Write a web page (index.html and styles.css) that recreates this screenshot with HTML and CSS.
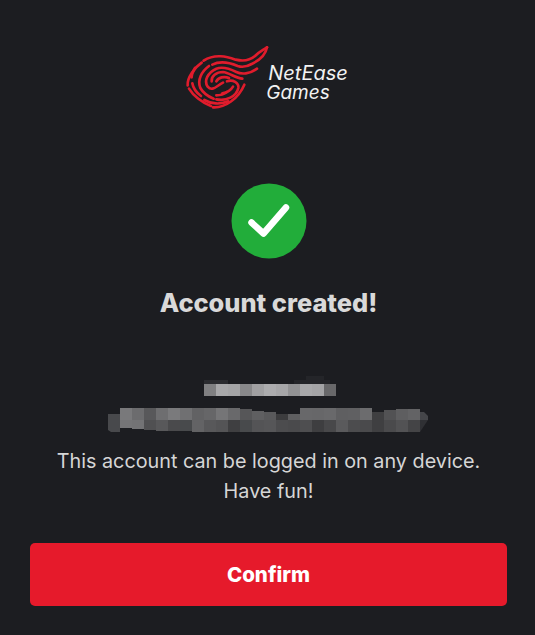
FILE: index.html
```html
<!DOCTYPE html>
<html lang="en">
<head>
<meta charset="utf-8">
<title>Account created</title>
<link rel="stylesheet" href="styles.css">
</head>
<body>
<main class="page">
  <div class="logo">
    <svg class="logo-mark" viewBox="0 0 270 198" aria-hidden="true">
      <g fill="none" stroke="#e01c2c" stroke-width="8" stroke-linecap="round" stroke-linejoin="round">
        <path d="M252 10C238 20 228 24 216 36C200 50 180 52 158 47C132 38 96 28 62 50"/>
        <path d="M252 10C248 32 228 50 206 60C192 68 176 70 164 66C140 56 112 50 88 62"/>
        <path d="M56 56C36 70 12 100 14 124"/>
        <path d="M36 72C30 82 26 92 26 100"/>
        <path d="M18 134C30 154 56 176 84 186"/>
        <path d="M90 190C126 192 166 164 184 122"/>
        <path d="M78 66C56 82 42 108 52 132C60 146 76 158 92 164"/>
        <path d="M28 118C30 130 40 146 54 156"/>
        <path d="M64 168C84 180 112 182 136 172"/>
        <path d="M100 166C130 172 160 158 166 132C168 116 150 106 132 112"/>
        <path d="M120 116C100 126 88 144 74 128C62 110 74 86 100 74C122 66 144 76 160 84C176 92 200 90 222 74"/>
        <path d="M86 112C84 96 100 84 120 84C138 86 158 102 178 104"/>
        <path d="M100 112C106 100 124 96 138 102"/>
        <path d="M118 148C132 146 144 138 150 128"/>
        <path d="M100 154C114 154 124 150 132 144"/>
      </g>
    </svg>
    <div class="logo-text">
      <span class="logo-net">NetEase</span>
      <span class="logo-games">Games</span>
    </div>
  </div>

  <svg class="check" viewBox="0 0 76 76" aria-hidden="true">
    <circle cx="38" cy="38" r="37.5" fill="#22ad3a"/>
    <path d="M20.5 39.5L32.5 50.5L55 24.5" fill="none" stroke="#fff" stroke-width="6.5" stroke-linecap="round" stroke-linejoin="round"/>
  </svg>

  <h1 class="title">Account created!</h1>

  <svg class="mosaic" viewBox="0 0 336 60" aria-hidden="true">
    <g>
      <path d="M96 4L120 4V8H96Z" fill="#2b2c30"/>
      <path d="M186 4L198 4V0H216V4H222V8H186Z" fill="#242529"/>
      <rect x="96" y="8" width="12" height="12" fill="#808082"/>
      <rect x="108" y="8" width="12" height="12" fill="#a8a8aa"/>
      <rect x="120" y="8" width="12" height="12" fill="#a4a4a6"/>
      <rect x="132" y="8" width="12" height="12" fill="#88888a"/>
      <rect x="144" y="8" width="12" height="12" fill="#a0a0a2"/>
      <rect x="156" y="8" width="12" height="12" fill="#acacae"/>
      <rect x="168" y="8" width="12" height="12" fill="#a6a6a8"/>
      <rect x="180" y="8" width="12" height="12" fill="#929294"/>
      <rect x="192" y="8" width="12" height="12" fill="#a8a8aa"/>
      <rect x="204" y="8" width="12" height="12" fill="#a4a4a6"/>
      <rect x="216" y="8" width="12" height="12" fill="#68686a"/>
      <path d="M0 38H12V56H3L0 54Z" fill="#48494c"/>
      <rect x="12" y="32" width="12" height="12" fill="#79797b"/>
      <rect x="24" y="32" width="12" height="12" fill="#6c6c6e"/>
      <rect x="36" y="32" width="12" height="12" fill="#58585a"/>
      <rect x="48" y="32" width="12" height="12" fill="#6e6e70"/>
      <rect x="60" y="32" width="12" height="12" fill="#7a7a7c"/>
      <rect x="72" y="32" width="12" height="12" fill="#707072"/>
      <rect x="84" y="32" width="12" height="12" fill="#626264"/>
      <rect x="96" y="32" width="12" height="12" fill="#666668"/>
      <rect x="108" y="32" width="12" height="12" fill="#757577"/>
      <rect x="120" y="32" width="12" height="12" fill="#69696b"/>
      <rect x="132" y="33" width="12" height="11" fill="#565658"/>
      <rect x="144" y="35" width="12" height="9" fill="#5f5f61"/>
      <rect x="156" y="36" width="12" height="8" fill="#59595b"/>
      <rect x="168" y="38" width="12" height="6" fill="#3c3c3e"/>
      <rect x="180" y="38" width="12" height="6" fill="#5e5e60"/>
      <rect x="192" y="32" width="12" height="12" fill="#68686a"/>
      <rect x="204" y="32" width="12" height="12" fill="#676769"/>
      <rect x="216" y="32" width="12" height="12" fill="#69696b"/>
      <rect x="228" y="32" width="12" height="12" fill="#5f5f61"/>
      <rect x="240" y="32" width="12" height="12" fill="#606062"/>
      <rect x="252" y="32" width="12" height="12" fill="#6c6c6e"/>
      <rect x="264" y="36" width="12" height="8" fill="#3f3f41"/>
      <rect x="276" y="34" width="12" height="10" fill="#525254"/>
      <rect x="288" y="33" width="12" height="11" fill="#5e5e60"/>
      <rect x="300" y="33" width="12" height="11" fill="#636365"/>
      <path d="M312 36H316L320 40V44H312Z" fill="#45464a"/>
      <rect x="12" y="44" width="12" height="8" fill="#757577"/>
      <rect x="24" y="44" width="12" height="9" fill="#737375"/>
      <rect x="36" y="44" width="12" height="10" fill="#505052"/>
      <rect x="48" y="44" width="12" height="11" fill="#58585a"/>
      <rect x="60" y="44" width="12" height="11" fill="#4a4a4c"/>
      <rect x="72" y="44" width="12" height="11" fill="#484a4c"/>
      <rect x="84" y="44" width="12" height="12" fill="#636365"/>
      <rect x="96" y="44" width="12" height="12" fill="#58585a"/>
      <rect x="108" y="44" width="12" height="12" fill="#545456"/>
      <rect x="120" y="44" width="12" height="12" fill="#3f3f41"/>
      <rect x="132" y="44" width="12" height="12" fill="#484a4c"/>
      <rect x="144" y="44" width="12" height="12" fill="#545456"/>
      <rect x="156" y="44" width="12" height="12" fill="#565658"/>
      <rect x="168" y="44" width="12" height="12" fill="#4c4c4e"/>
      <rect x="180" y="44" width="12" height="12" fill="#4a4a4c"/>
      <rect x="192" y="44" width="12" height="12" fill="#4e4e50"/>
      <rect x="204" y="44" width="12" height="12" fill="#3e3e40"/>
      <rect x="216" y="44" width="12" height="12" fill="#48484a"/>
      <rect x="228" y="44" width="12" height="12" fill="#5a5a5c"/>
      <rect x="240" y="44" width="12" height="12" fill="#4c4c4e"/>
      <rect x="252" y="44" width="12" height="12" fill="#4a4a4c"/>
      <rect x="264" y="44" width="12" height="12" fill="#3f3f41"/>
      <rect x="276" y="44" width="12" height="12" fill="#4a4a4c"/>
      <rect x="288" y="44" width="12" height="12" fill="#525254"/>
      <rect x="300" y="44" width="12" height="12" fill="#444446"/>
      <path d="M312 44H320L316 50L312 56Z" fill="#2f3034"/>
    </g>
  </svg>

  <p class="message">This account can be logged in on any device.<br>Have fun!</p>

  <button class="confirm" type="button">Confirm</button>
</main>
</body>
</html>
```

FILE: styles.css
```css
* {
  box-sizing: border-box;
}

html,
body {
  margin: 0;
  height: 100%;
}

body {
  background: #1c1d21;
  font-family: Inter, "Liberation Sans", sans-serif;
  overflow: hidden;
}

.page {
  display: flex;
  flex-direction: column;
  align-items: center;
  padding: 44px 28px 0 30px;
}

.logo {
  display: flex;
  align-items: flex-start;
  height: 64px;
  margin-left: -6px;
}

.logo-mark {
  display: block;
  flex: none;
  width: 90px;
  height: 66px;
  margin-right: -5px;
}

.logo-text {
  display: flex;
  flex-direction: column;
  margin-top: 20px;
  color: #f2f2f2;
  font-family: Inter, sans-serif;
  font-style: italic;
  font-size: 20px;
  font-weight: 400;
  line-height: 19px;
}

.logo-games {
  margin-left: -2px;
  font-size: 19px;
}

.check {
  display: block;
  width: 76px;
  height: 76px;
  margin-top: 75px;
}

.title {
  margin: 29px 0 0;
  color: #d9d9d9;
  font-size: 25.4px;
  font-weight: 800;
  line-height: 30px;
  text-align: center;
}

.mosaic {
  display: block;
  width: 336px;
  height: 60px;
  margin-top: 58px;
  margin-left: 14px;
}

.message {
  margin: 10px 0 0;
  color: #d6d6d6;
  font-size: 19.8px;
  font-weight: 400;
  line-height: 30px;
  text-align: center;
}

.confirm {
  display: block;
  width: 100%;
  height: 63px;
  margin-top: 37px;
  border: 0;
  border-radius: 5px;
  background: #e61a2b;
  color: #fff;
  font-family: inherit;
  font-size: 20.5px;
  font-weight: 800;
}
```
